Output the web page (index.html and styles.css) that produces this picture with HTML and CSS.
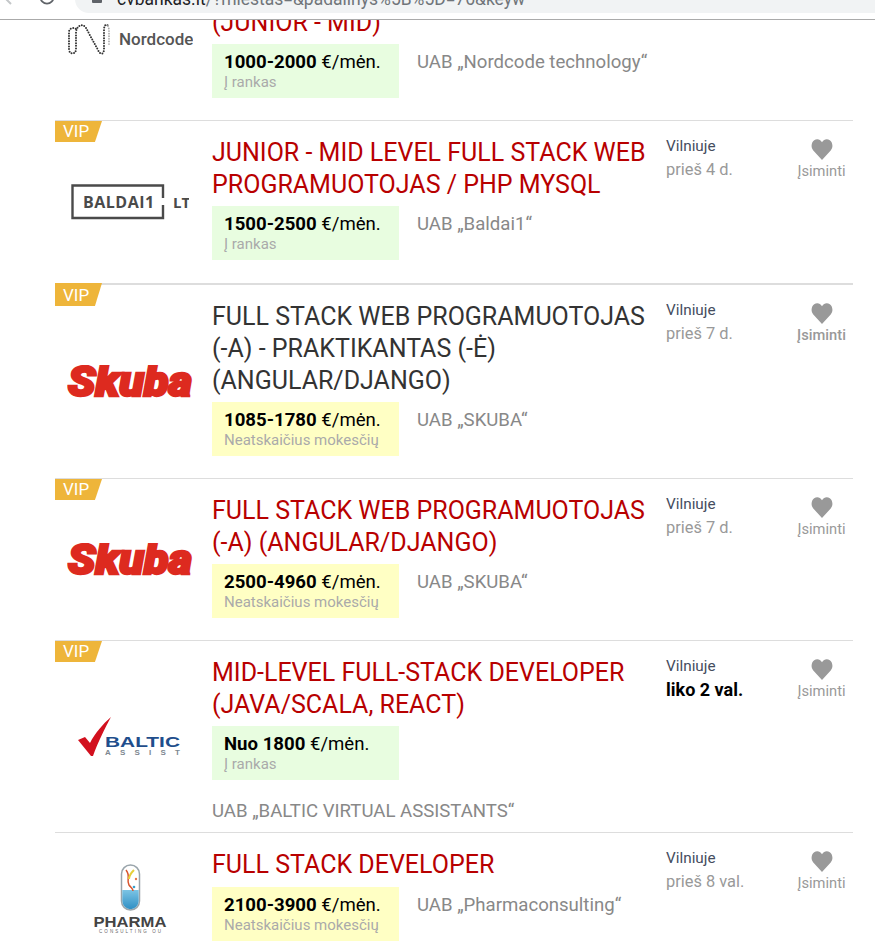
FILE: index.html
```html
<!DOCTYPE html>
<html lang="en">
<head>
    <meta charset="UTF-8">
    <meta name="viewport" content="width=device-width, initial-scale=1.0">
    <title>CV Bankas</title>
    <link rel="stylesheet" href="styles.css">
</head>
<body>
    <div class="topbar">
        <svg class="back" width="12" height="8" viewBox="0 0 12 8"><path d="M2 0 L7 -5 M2 0 L7 5" stroke="#c4c7c9" stroke-width="2" fill="none" transform="translate(0 -1)"/></svg>
        <svg class="reload" width="20" height="20" viewBox="0 0 20 20"><circle cx="10" cy="10" r="6.6" stroke="#5f6368" stroke-width="1.8" fill="none"/></svg>
        <div class="omnibox">
            <span class="lock"></span>
            <span class="url">cvbankas.lt<span class="url-path">/?miestas=&amp;padalinys%5B%5D=76&amp;keyw</span></span>
        </div>
    </div>

    <div class="list">
        <div class="job first tight">
            <div class="logo">
                <svg width="126" height="36" viewBox="0 0 126 36">
                    <path d="M2 27 L2 10 C2 6 7 5 9 7 M2 27 C2 33 9 33 9 27 L9 10 C10 3 16 1 19 6 L31 28 C33 33 37 33 37 27 L37 8 C37 2 40 2 41 4" fill="none" stroke="#333" stroke-width="2" stroke-linecap="round" stroke-dasharray="0 2.600"/>
                    <path d="M41 4 C42 6 42 8 42 10 L42 24" fill="none" stroke="#aaa" stroke-width="1.800" stroke-linecap="round" stroke-dasharray="0 2.600"/>
                    <text x="52" y="23" class="logo-nordcode">Nordcode</text>
                </svg>
            </div>
            <div class="main">
                <a class="title red">JUNIOR FULL STACK DEVELOPER<br>(JUNIOR - MID)</a>
                <div class="details">
                    <div class="salary green"><div class="sum"><b>1000-2000</b> €/mėn.</div><div class="sub">Į rankas</div></div>
                    <div class="company">UAB „Nordcode technology“</div>
                </div>
            </div>
        </div>

        <div class="job thick">
            <span class="vip">VIP</span>
            <div class="logo">
                <svg width="118" height="36" viewBox="0 0 118 36">
                    <path d="M92 14 V1.500 H1.500 V34 H92 V21" fill="none" stroke="#4a4a4a" stroke-width="2.400"/>
                    <text x="12" y="23.500" class="logo-baldai">BALDAI1</text>
                    <text x="102" y="23.500" class="logo-baldai-lt">LT</text>
                </svg>
            </div>
            <div class="main">
                <a class="title red">JUNIOR - MID LEVEL FULL STACK WEB PROGRAMUOTOJAS / PHP MYSQL</a>
                <div class="details">
                    <div class="salary green"><div class="sum"><b>1500-2500</b> €/mėn.</div><div class="sub">Į rankas</div></div>
                    <div class="company">UAB „Baldai1“</div>
                </div>
            </div>
            <div class="meta"><div class="city">Vilniuje</div><div class="age">prieš 4 d.</div></div>
            <div class="save">
                <svg width="22" height="21" viewBox="0 0 24 21" preserveAspectRatio="none"><path d="M12 21 L2.500 11.500 C-0.500 8.500 0.300 3.300 3.500 1.300 C6.500 -0.500 10 0.300 12 3.200 C14 0.300 17.500 -0.500 20.500 1.300 C23.700 3.300 24.500 8.500 21.500 11.500 Z" fill="#999"/></svg>
                <span>Įsiminti</span>
            </div>
        </div>

        <div class="job tight">
            <span class="vip raised">VIP</span>
            <div class="logo">
                <svg width="126" height="34" viewBox="0 0 126 34"><text x="1" y="31" textLength="124" lengthAdjust="spacingAndGlyphs" class="logo-skuba">Skuba</text></svg>
            </div>
            <div class="main">
                <a class="title">FULL STACK WEB PROGRAMUOTOJAS (-A) - PRAKTIKANTAS (-Ė) (ANGULAR/DJANGO)</a>
                <div class="details">
                    <div class="salary yellow"><div class="sum"><b>1085-1780</b> €/mėn.</div><div class="sub">Neatskaičius mokesčių</div></div>
                    <div class="company">UAB „SKUBA“</div>
                </div>
            </div>
            <div class="meta"><div class="city">Vilniuje</div><div class="age">prieš 7 d.</div></div>
            <div class="save saved">
                <svg width="22" height="21" viewBox="0 0 24 21" preserveAspectRatio="none"><path d="M12 21 L2.500 11.500 C-0.500 8.500 0.300 3.300 3.500 1.300 C6.500 -0.500 10 0.300 12 3.200 C14 0.300 17.500 -0.500 20.500 1.300 C23.700 3.300 24.500 8.500 21.500 11.500 Z" fill="#999"/></svg>
                <span>Įsiminti</span>
            </div>
        </div>

        <div class="job tight">
            <span class="vip">VIP</span>
            <div class="logo">
                <svg width="126" height="34" viewBox="0 0 126 34"><text x="1" y="31" textLength="124" lengthAdjust="spacingAndGlyphs" class="logo-skuba">Skuba</text></svg>
            </div>
            <div class="main">
                <a class="title red">FULL STACK WEB PROGRAMUOTOJAS (-A) (ANGULAR/DJANGO)</a>
                <div class="details">
                    <div class="salary yellow"><div class="sum"><b>2500-4960</b> €/mėn.</div><div class="sub">Neatskaičius mokesčių</div></div>
                    <div class="company">UAB „SKUBA“</div>
                </div>
            </div>
            <div class="meta"><div class="city">Vilniuje</div><div class="age">prieš 7 d.</div></div>
            <div class="save">
                <svg width="22" height="21" viewBox="0 0 24 21" preserveAspectRatio="none"><path d="M12 21 L2.500 11.500 C-0.500 8.500 0.300 3.300 3.500 1.300 C6.500 -0.500 10 0.300 12 3.200 C14 0.300 17.500 -0.500 20.500 1.300 C23.700 3.300 24.500 8.500 21.500 11.500 Z" fill="#999"/></svg>
                <span>Įsiminti</span>
            </div>
        </div>

        <div class="job tight">
            <span class="vip">VIP</span>
            <div class="logo">
                <svg width="104" height="40" viewBox="0 0 104 40">
                    <path d="M0 23 L7 20 L12 26 C17 16 25 7 33 0 C27 11 20 25 15 39 L13 39 Z" fill="#d2101e"/>
                    <text x="27" y="30" textLength="75" lengthAdjust="spacingAndGlyphs" class="logo-baltic">BALTIC</text>
                    <text x="27" y="38" textLength="75" class="logo-assist">ASSIST</text>
                </svg>
            </div>
            <div class="main">
                <a class="title red">MID-LEVEL FULL-STACK DEVELOPER (JAVA/SCALA, REACT)</a>
                <div class="details">
                    <div class="salary green"><div class="sum"><b>Nuo 1800</b> €/mėn.</div><div class="sub">Į rankas</div></div>
                    <div class="company">UAB „BALTIC VIRTUAL ASSISTANTS“</div>
                </div>
            </div>
            <div class="meta"><div class="city">Vilniuje</div><div class="age urgent">liko 2 val.</div></div>
            <div class="save">
                <svg width="22" height="21" viewBox="0 0 24 21" preserveAspectRatio="none"><path d="M12 21 L2.500 11.500 C-0.500 8.500 0.300 3.300 3.500 1.300 C6.500 -0.500 10 0.300 12 3.200 C14 0.300 17.500 -0.500 20.500 1.300 C23.700 3.300 24.500 8.500 21.500 11.500 Z" fill="#999"/></svg>
                <span>Įsiminti</span>
            </div>
        </div>

        <div class="job last">
            <div class="logo">
                <svg width="74" height="70" viewBox="0 0 74 70">
                    <defs>
                        <linearGradient id="liquid" x1="0" y1="0" x2="0" y2="1">
                            <stop offset="0" stop-color="#7cc4e4"/>
                            <stop offset="1" stop-color="#2f8fc4"/>
                        </linearGradient>
                    </defs>
                    <rect x="28.500" y="1" width="18" height="45" rx="9" fill="#fff" stroke="#9aa5ab" stroke-width="1.500"/>
                    <path d="M29.300 26 H45.700 V37 A8.200 8.200 0 0 1 29.300 37 Z" fill="url(#liquid)"/>
                    <path d="M33 6 C38 12 33 16 36 21 C38 24 40 24 40 27" fill="none" stroke="#d8552e" stroke-width="1.500"/>
                    <path d="M41 6 C38 9 36 11 36 15" fill="none" stroke="#e6cf3a" stroke-width="2"/>
                    <circle cx="43" cy="15" r="1.200" fill="#e8754a"/>
                    <circle cx="41" cy="23" r="1.300" fill="#35a0d0"/>
                    <text x="0.500" y="63" textLength="73" lengthAdjust="spacingAndGlyphs" class="logo-pharma">PHARMA</text>
                    <text x="6" y="69" textLength="62" class="logo-consulting">CONSULTING OU</text>
                </svg>
            </div>
            <div class="main">
                <a class="title red">FULL STACK DEVELOPER</a>
                <div class="details">
                    <div class="salary yellow"><div class="sum"><b>2100-3900</b> €/mėn.</div><div class="sub">Neatskaičius mokesčių</div></div>
                    <div class="company">UAB „Pharmaconsulting“</div>
                </div>
            </div>
            <div class="meta"><div class="city">Vilniuje</div><div class="age">prieš 8 val.</div></div>
            <div class="save">
                <svg width="22" height="21" viewBox="0 0 24 21" preserveAspectRatio="none"><path d="M12 21 L2.500 11.500 C-0.500 8.500 0.300 3.300 3.500 1.300 C6.500 -0.500 10 0.300 12 3.200 C14 0.300 17.500 -0.500 20.500 1.300 C23.700 3.300 24.500 8.500 21.500 11.500 Z" fill="#999"/></svg>
                <span>Įsiminti</span>
            </div>
        </div>
    </div>
</body>
</html>
```

FILE: styles.css
```css
* {
    margin: 0;
    padding: 0;
    box-sizing: border-box;
}

html, body {
    height: 941px;
    overflow: hidden;
}

body {
    background: #ffffff;
    font-family: Roboto, "Liberation Sans", sans-serif;
    color: #333333;
}

/* browser chrome, cut off at the top of the screenshot */
.topbar {
    display: flex;
    height: 20px;
    overflow: hidden;
    background: #ffffff;
    border-bottom: 1px solid #aaaaaa;
}

.back {
    margin-left: 4px;
}

.reload {
    margin: -13px 0 0 21px;
}

.omnibox {
    display: flex;
    align-items: center;
    flex: 1;
    height: 28px;
    margin: -15px 0 0 18px;
    padding-left: 17px;
    background: #f1f3f4;
    border-radius: 14px 0 0 14px;
}

.lock {
    width: 10px;
    height: 8px;
    border-radius: 1px;
    background: #5f6368;
}

.url {
    margin-left: 15px;
    font-size: 17.500px;
    color: #202124;
    white-space: nowrap;
}

.url-path {
    color: #70757a;
}

.list {
    height: 921px;
    padding: 0 22px 0 55px;
    overflow: hidden;
}

.job {
    display: flex;
    position: relative;
    border-bottom: 1px solid #dddddd;
}

.job.first {
    margin-top: -61px;
}

.job.thick {
    border-bottom-width: 2px;
}

.vip {
    position: absolute;
    left: 0;
    top: 0;
    width: 47px;
    height: 21px;
    padding-left: 8px;
    background: #eeb53a;
    color: #ffffff;
    font-size: 17px;
    line-height: 21px;
    clip-path: polygon(0 0, 100% 0, 85% 100%, 0 100%);
}

.vip.raised {
    top: -2px;
    height: 23px;
    padding-top: 2px;
}

.logo {
    display: flex;
    flex: none;
    align-items: center;
    justify-content: center;
    width: 150px;
    margin-right: 7px;
}

.main {
    flex: none;
    width: 445px;
    padding: 16px 0 10px;
}

.job.tight .main {
    padding-bottom: 9px;
}

.title {
    display: block;
    font-size: 25px;
    line-height: 32px;
    color: #333333;
}

.title.red {
    color: #b80000;
}

.details {
    display: flex;
    flex-wrap: wrap;
    margin-top: 5px;
}

.job.last .details {
    margin-top: 6px;
}

.salary {
    width: 187px;
    height: 54px;
    margin: 0 18px 13px 0;
    padding: 7px 12px 0;
}

.salary.green {
    background: #e8fde0;
}

.salary.yellow {
    background: #ffffc4;
}

.sum {
    font-size: 18.600px;
    line-height: 22px;
    color: #000000;
}

.sub {
    font-size: 15px;
    line-height: 18px;
    color: #aaaaaa;
}

.company {
    margin-top: 6px;
    font-size: 18.600px;
    line-height: 24px;
    color: #888888;
}

.meta {
    flex: none;
    width: 131px;
    margin-left: 9px;
    padding-top: 14px;
    font-size: 15.300px;
    line-height: 23px;
}

.city {
    color: #454d60;
}

.age {
    font-size: 16.400px;
    color: #999999;
}

.age.urgent {
    font-size: 18px;
    color: #000000;
    font-weight: 700;
}

.save {
    display: flex;
    flex: none;
    flex-direction: column;
    align-items: center;
    width: 49px;
    padding-top: 18px;
    font-size: 14.700px;
    line-height: 18px;
    color: #999999;
}

.save span {
    margin-top: 2px;
}

.save.saved span {
    font-weight: 500;
}

/* logos */
.logo svg {
    display: block;
}

.logo-nordcode {
    font-family: Roboto, sans-serif;
    font-size: 17px;
    font-weight: 500;
    fill: #555555;
}

.logo-baldai {
    font-family: "Open Sans", sans-serif;
    font-size: 16px;
    font-weight: 700;
    letter-spacing: 0.5px;
    fill: #4a4a4a;
}

.logo-baldai-lt {
    font-family: "Open Sans", sans-serif;
    font-size: 15px;
    font-weight: 700;
    fill: #4a4a4a;
}

.logo-skuba {
    font-family: Roboto, sans-serif;
    font-size: 42px;
    font-weight: 900;
    font-style: italic;
    fill: #dd2a1f;
    stroke: #dd2a1f;
    stroke-width: 2.500px;
}

.logo-baltic {
    font-family: "Liberation Sans", sans-serif;
    font-size: 15.500px;
    font-weight: 700;
    fill: #1f4e8c;
}

.logo-assist {
    font-family: "Liberation Sans", sans-serif;
    font-size: 8px;
    font-weight: 700;
    fill: #7d8790;
}

.logo-pharma {
    font-family: "Liberation Sans", sans-serif;
    font-size: 15px;
    font-weight: 700;
    fill: #444444;
}

.logo-consulting {
    font-family: "Liberation Sans", sans-serif;
    font-size: 4.500px;
    fill: #666666;
}
```
